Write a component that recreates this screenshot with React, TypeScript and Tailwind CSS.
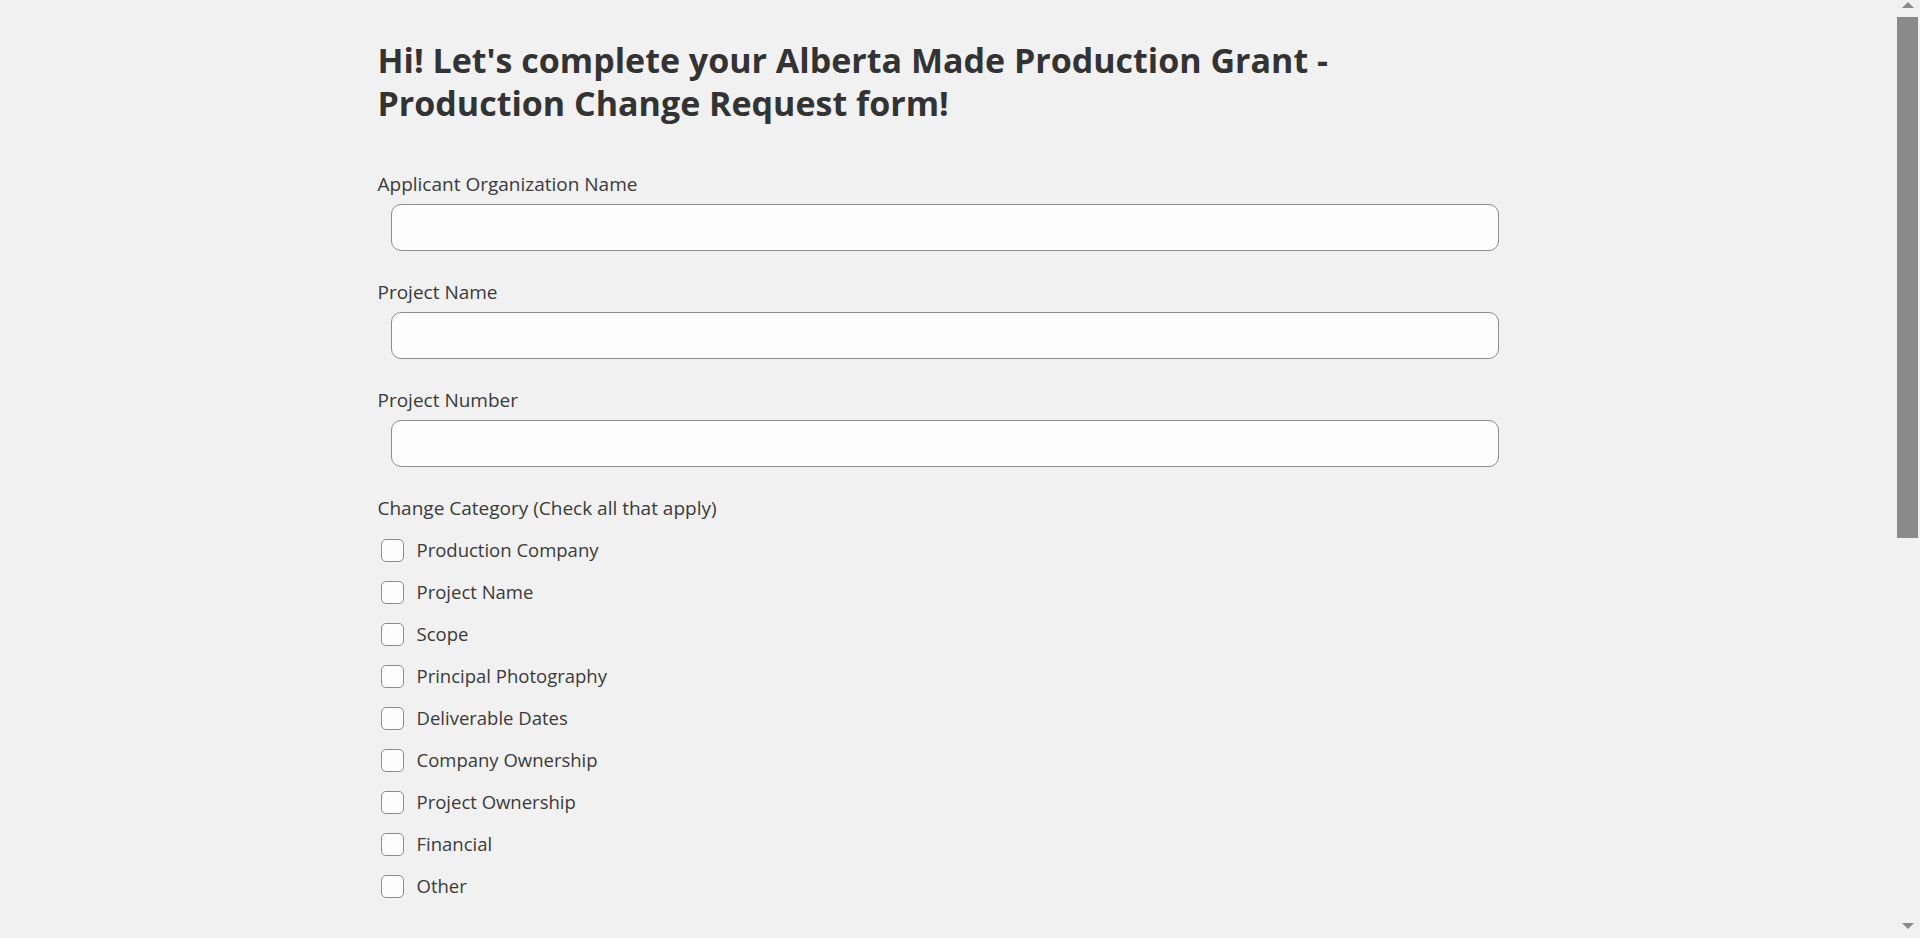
const categories = [
  "Production Company",
  "Project Name",
  "Scope",
  "Principal Photography",
  "Deliverable Dates",
  "Company Ownership",
  "Project Ownership",
  "Financial",
  "Other",
];

const textFields = ["Applicant Organization Name", "Project Name", "Project Number"];

function Field({ label }: { label: string }) {
  return (
    <div className="flex flex-col">
      <label className="text-[19px] leading-[24px]">{label}</label>
      <input
        type="text"
        className="mt-[8px] ml-[13px] h-[47px] w-[1108px] rounded-[10px] border border-[#8c8c8c] bg-[#fdfdfd] px-3 outline-none"
      />
    </div>
  );
}

function Scrollbar() {
  return (
    <div className="flex w-[25px] shrink-0 flex-col items-center bg-[#f1f1f1]">
      <div className="mt-[2px] h-0 w-0 border-x-[6px] border-b-[6px] border-x-transparent border-b-[#8a8a8a]" />
      <div className="mt-[9px] h-[521px] w-[21px] bg-[#8a8a8a]" />
      <div className="flex-1" />
      <div className="mb-[9px] h-0 w-0 border-x-[6px] border-t-[6px] border-x-transparent border-t-[#8a8a8a]" />
    </div>
  );
}

export default function App() {
  return (
    <div
      className="flex h-[938px] w-full overflow-hidden bg-[#f1f1f1] text-[#333]"
      style={{ fontFamily: '"Open Sans", "Noto Sans", sans-serif' }}
    >
      <main className="flex-1 overflow-hidden">
        <div className="mx-auto w-[1140px] pt-[39px]">
          <h1 className="max-w-[1060px] text-[34px] font-bold leading-[43px] text-[#333]">
            Hi! Let's complete your Alberta Made Production Grant - Production Change Request form!
          </h1>

          <form className="mt-[47px] flex flex-col gap-[29px] text-[#3a3a3a]">
            {textFields.map((f) => (
              <Field key={f} label={f} />
            ))}

            <div className="flex flex-col">
              <span className="text-[19px] leading-[24px]">Change Category (Check all that apply)</span>
              <div className="mt-[9px] flex flex-col">
                {categories.map((c) => (
                  <label key={c} className="flex h-[42px] items-center">
                    <span className="ml-[3px] h-[23px] w-[23px] rounded-[5px] border border-[#8c8c8c] bg-[#fdfdfd]" />
                    <span className="ml-[13px] text-[18.5px]">{c}</span>
                  </label>
                ))}
              </div>
            </div>
          </form>
        </div>
      </main>
      <Scrollbar />
    </div>
  );
}
